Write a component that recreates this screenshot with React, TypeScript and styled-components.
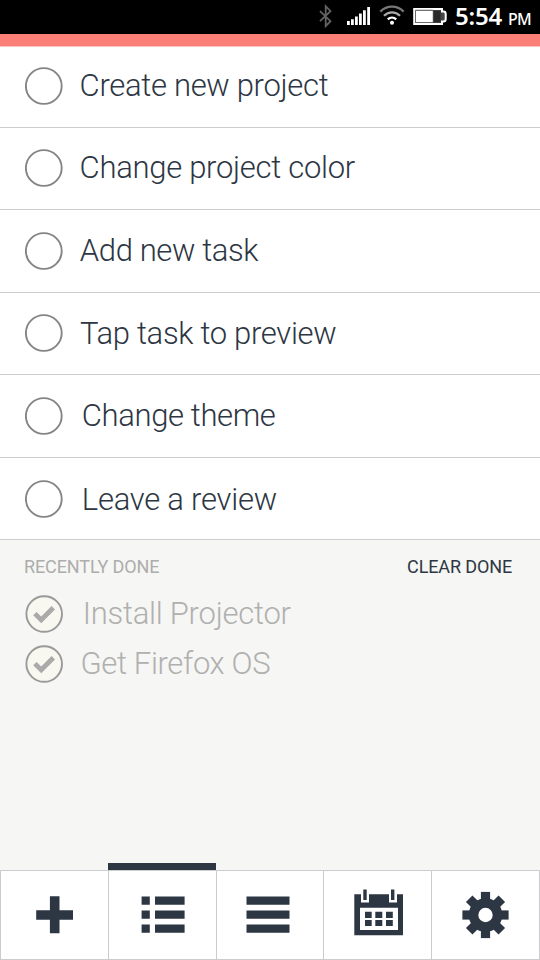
import React from "react";
import styled, { createGlobalStyle } from "styled-components";

const ink = "#2d3643";
const line = "#cbcccd";

const GlobalStyle = createGlobalStyle`
  *, *::before, *::after { box-sizing: border-box; }
  body { margin: 0; font-family: Roboto, "Liberation Sans", sans-serif; }
  button { font: inherit; border: 0; background: none; padding: 0; margin: 0; color: inherit; }
  svg { display: block; flex: none; }
`;

const Screen = styled.div`
  width: 540px;
  height: 960px;
  display: flex;
  flex-direction: column;
  background: #f6f6f4;
  overflow: hidden;
`;

const StatusBar = styled.header`
  height: 34px;
  flex: none;
  display: flex;
  align-items: flex-start;
  background: #000;
  color: #fff;
  padding-left: 316px;
`;

const Clock = styled.div`
  display: flex;
  align-items: baseline;
  margin-left: 6px;
  font-family: "Noto Sans", "Open Sans", sans-serif;
  line-height: 32px;
  white-space: nowrap;
`;

const Time = styled.span`
  font-size: 24px;
  font-weight: 600;
  letter-spacing: -0.2px;
`;

const Meridiem = styled.span`
  font-size: 16px;
  font-weight: 500;
  margin-left: 6px;
  letter-spacing: -0.7px;
`;

const ProjectStripe = styled.div`
  height: 13px;
  flex: none;
  background: #fa7f76;
  border-bottom: 1px solid #fdc4c0;
`;

const TaskList = styled.ul`
  margin: 0;
  padding: 0;
  list-style: none;
  background: #fff;
`;

const TaskRow = styled.li<{ $height: number; $drop: number }>`
  height: ${(p) => p.$height}px;
  display: flex;
  align-items: flex-start;
  padding: ${(p) => p.$drop}px 0 0 25px;
  border-bottom: 1px solid ${line};
  color: ${ink};
`;

const TaskTitle = styled.span<{ $gap: number; $track: number; $drop?: number }>`
  margin: ${(p) => p.$drop ?? 1}px 0 0 ${(p) => p.$gap}px;
  font-size: 31px;
  font-weight: 300;
  line-height: 36px;
  letter-spacing: ${(p) => p.$track}px;
  white-space: nowrap;
`;

const DonePanel = styled.section`
  flex: 1;
  padding: 16px 28px 0 24px;
`;

const DoneHeader = styled.div`
  display: flex;
  justify-content: space-between;
  height: 39px;
  font-size: 18px;
  line-height: 21px;
`;

const DoneLabel = styled.span`
  color: #adadac;
  letter-spacing: -0.1px;
`;

const ClearButton = styled.button`
  height: 21px;
  color: ${ink};
  letter-spacing: -0.13px;
`;

const DoneRow = styled.div`
  display: flex;
  align-items: flex-start;
  height: 50px;
  padding-left: 1px;
  color: #b0b0af;
`;

const TabBar = styled.nav`
  height: 97px;
  flex: none;
  display: grid;
  grid-template-columns: 108px 108px 107px 108px 109px;
`;

const Tab = styled.button<{ $active?: boolean; $top: number; $left: number }>`
  display: flex;
  align-items: flex-start;
  padding: ${(p) => p.$top}px 0 0 ${(p) => p.$left}px;
  border-top: 7px solid ${(p) => (p.$active ? ink : "transparent")};
  background: #fff;
  background-clip: padding-box;
  box-shadow: inset 1px 0 ${line}, inset 0 1px ${line}, inset 0 -1px ${line};
  color: ${ink};
  &:last-child { box-shadow: inset 1px 0 ${line}, inset 0 1px ${line}, inset 0 -1px ${line}, inset -1px 0 ${line}; }
`;

const OpenCircle = () => (
  <svg width="38" height="38" viewBox="0 0 38 38">
    <circle cx="18.8" cy="19" r="17.9" fill="#fff" stroke="#858585" strokeWidth="1.9" />
  </svg>
);

const CheckedCircle = () => (
  <svg width="38" height="38" viewBox="0 0 38 38">
    <circle cx="19.2" cy="19" r="17.8" fill="#f8f8f0" stroke="#999a99" strokeWidth="1.9" />
    <path d="M9.9 18.6L16.2 24.9L28.3 12.8" fill="none" stroke="#a9aaa9" strokeWidth="4.8" />
  </svg>
);

const StatusIcons = () => (
  <svg width="133" height="34" viewBox="316 0 133 34">
    <path d="M320 11.2L330.5 21.2L325.7 26V6.2L330.5 11.2L320 21.2" fill="none" stroke="#626262" strokeWidth="1.8" />
    <path d="M347 21h2.8v4H347zM351 19.2h2.8V25H351zM355 16.5h2.8V25H355zM359 13.5h2.8V25H359zM363 10.2h2.8V25H363zM367.2 7h2.8v18h-2.8z" fill="#fff" />
    <g fill="none" strokeWidth="2.3">
      <path d="M380.3 11.6C387 5 397 5 403.7 11.6" stroke="#777" />
      <path d="M384 15.8C388.5 11.2 395.5 11.2 400 15.8" stroke="#aaa" />
      <path d="M387.8 19.4C390.2 17 393.8 17 396.2 19.4" stroke="#fff" />
    </g>
    <circle cx="392" cy="22.7" r="2" fill="#fff" />
    <path d="M414.2 9H442v2.6h1.5q2.2 0 2.2 2.4v5q0 2.5-2.2 2.5H442V24H414.2z" fill="#444" stroke="#fff" strokeWidth="2" />
    <path d="M416 10.8h16.8v11.4H416z" fill="#fff" />
    <path d="M434 10.8h6.5v11.4H434z" fill="#292929" />
    <path d="M415.5 10.2h17" stroke="#777" strokeWidth="1" />
  </svg>
);

const PlusIcon = () => (
  <svg width="38" height="38" viewBox="0 0 38 38" fill="currentColor">
    <path d="M13.9 0.3h9.6v14h13.5v9.5H23.5v13.4h-9.6V23.8H0.2v-9.5h13.7z" />
  </svg>
);

const ListIcon = () => (
  <svg width="44" height="38" viewBox="0 0 44 38" fill="currentColor">
    <path d="M.6.5h8.2v8.3H.6zM14 .5h29.6v8.3H14zM.6 14.4h8.2v8.4H.6zM14 14.4h29.6v8.4H14zM.6 28.4h8.2v8.3H.6zM14 28.4h29.6v8.3H14z" />
  </svg>
);

const MenuIcon = () => (
  <svg width="44" height="38" viewBox="0 0 44 38" fill="currentColor">
    <path d="M.5.5h43v8.3H.5zM.5 14.4h43v8.4H.5zM.5 28.4h43v8.3H.5z" />
  </svg>
);

const CalendarIcon = () => (
  <svg width="50" height="48" viewBox="0 0 50 48" fill="currentColor">
    <path fillRule="evenodd" d="M.3 5.2H7v8.3h8V5.2h20v8.3h8V5.2h6v41.1H.3zM6 18.8V41h38V18.8z" />
    <path d="M9.3 0.4h3.4v10.6H9.3zM37 0.4h3.4v10.6H37zM11 22.8h6.7v6.1H11zM21.3 22.8h7v6.1h-7zM32 22.8h6.8v6.1H32zM11 31h6.7v6.1H11zM21.3 31h7v6.1h-7zM32 31h6.8v6.1H32z" />
  </svg>
);

const teeth = [0, 45, 90, 135, 180, 225, 270, 315];

const GearIcon = () => (
  <svg width="48" height="48" viewBox="-23.5 -24 48 48" fill="currentColor">
    {teeth.map((a) => (
      <path key={a} d="M-4.6 -23.1H4.6V-13H-4.6z" transform={`rotate(${a})`} />
    ))}
    <circle r="12" fill="none" stroke="currentColor" strokeWidth="9.6" />
  </svg>
);

const tasks = [
  { title: "Create new project", height: 81, drop: 20, gap: 16.6, track: -0.31, textDrop: 1 },
  { title: "Change project color", height: 82, drop: 21, gap: 16.6, track: -0.29, textDrop: 1 },
  { title: "Add new task", height: 83, drop: 22, gap: 16.8, track: -0.38, textDrop: 1 },
  { title: "Tap task to preview", height: 82, drop: 21.4, gap: 17, track: -0.31, textDrop: 1.6 },
  { title: "Change theme", height: 83, drop: 22, gap: 18.8, track: -0.37, textDrop: 1 },
  { title: "Leave a review", height: 82, drop: 22.2, gap: 18.8, track: -0.25, textDrop: 1.8 },
];

const doneTasks = [
  { title: "Install Projector", gap: 19.7, track: -0.25 },
  { title: "Get Firefox OS", gap: 17.5, track: -0.36 },
];

export default function App() {
  return (
    <>
      <GlobalStyle />
      <Screen>
        <StatusBar>
          <StatusIcons />
          <Clock>
            <Time>5:54</Time>
            <Meridiem>PM</Meridiem>
          </Clock>
        </StatusBar>
        <ProjectStripe />
        <TaskList>
          {tasks.map((t) => (
            <TaskRow key={t.title} $height={t.height} $drop={t.drop}>
              <OpenCircle />
              <TaskTitle $gap={t.gap} $track={t.track} $drop={t.textDrop}>{t.title}</TaskTitle>
            </TaskRow>
          ))}
        </TaskList>
        <DonePanel>
          <DoneHeader>
            <DoneLabel>RECENTLY DONE</DoneLabel>
            <ClearButton>CLEAR DONE</ClearButton>
          </DoneHeader>
          {doneTasks.map((t) => (
            <DoneRow key={t.title}>
              <CheckedCircle />
              <TaskTitle $gap={t.gap} $track={t.track}>{t.title}</TaskTitle>
            </DoneRow>
          ))}
        </DonePanel>
        <TabBar>
          <Tab aria-label="Add" $top={26} $left={36}><PlusIcon /></Tab>
          <Tab aria-label="Tasks" $active $top={26} $left={33}><ListIcon /></Tab>
          <Tab aria-label="Projects" $top={26} $left={30}><MenuIcon /></Tab>
          <Tab aria-label="Calendar" $top={19} $left={31}><CalendarIcon /></Tab>
          <Tab aria-label="Settings" $top={21} $left={31}><GearIcon /></Tab>
        </TabBar>
      </Screen>
    </>
  );
}
